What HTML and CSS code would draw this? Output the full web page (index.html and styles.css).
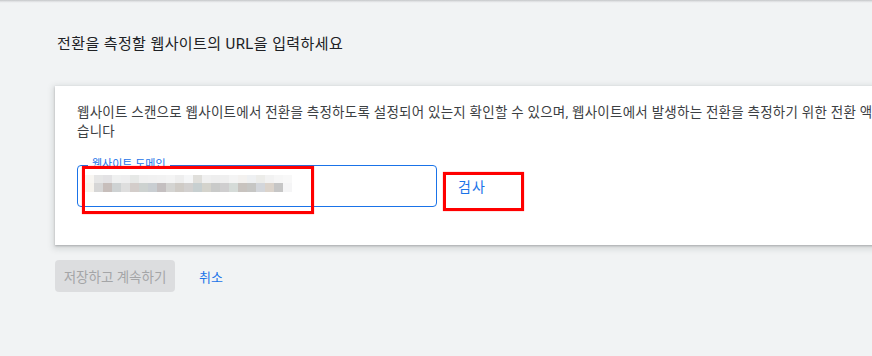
FILE: index.html
```html
<!DOCTYPE html>
<html lang="ko">
<head>
<meta charset="utf-8">
<title>전환 측정</title>
<link rel="stylesheet" href="styles.css">
</head>
<body>
<div class="topshadow"></div>
<main class="page">
  <h1 class="title">전환을 측정할 웹사이트의 URL을 입력하세요</h1>
  <section class="card">
    <p class="desc">웹사이트 스캔으로 웹사이트에서 전환을 측정하도록 설정되어 있는지 확인할 수 있으며, 웹사이트에서 발생하는 전환을 측정하기 위한 전환 액션을 설정할 수 있<br>습니다</p>
    <div class="field-row">
      <div class="field">
        <span class="legend">웹사이트 도메인</span>
        <div class="blur">
          <div class="blur-row r1"></div>
          <div class="blur-row r2"></div>
        </div>
      </div>
      <button class="check-btn" type="button">검사</button>
    </div>
  </section>
  <div class="actions">
    <button class="save-btn" type="button" disabled>저장하고 계속하기</button>
    <button class="cancel-btn" type="button">취소</button>
  </div>
</main>
<div class="mark mark-input"></div>
<div class="mark mark-check"></div>
</body>
</html>
```

FILE: styles.css
```css
html, body {
  margin: 0;
  padding: 0;
  overflow: hidden;
}
body {
  position: relative;
  width: 872px;
  height: 356px;
  background: #f1f3f4;
  font-family: Roboto, "Noto Sans CJK KR", sans-serif;
  color: #202124;
}
.topshadow {
  height: 3px;
  background: linear-gradient(#c4c6c8, #e6e7e9 60%, #f1f3f4);
}
.page {
  padding-left: 55px;
}
.title {
  margin: 31px 0 0 2px;
  font-size: 15px;
  line-height: 20px;
  letter-spacing: 0.4px;
  font-weight: 400;
  color: #202124;
}
.card {
  margin-top: 32px;
  width: 1200px;
  background: #fff;
  padding: 17px 0 38px 22px;
  box-shadow: 0 1px 2px rgba(60,64,67,.3), 0 2px 6px 2px rgba(60,64,67,.15);
}
.desc {
  margin: 0;
  font-size: 13.5px;
  line-height: 19px;
  letter-spacing: 0.25px;
  color: #3c4043;
}
.field-row {
  display: flex;
  align-items: center;
  margin-top: 24px;
}
.field {
  position: relative;
  box-sizing: border-box;
  width: 360px;
  height: 42px;
  border: 1px solid #1a73e8;
  border-radius: 4px;
  padding: 9px 0 0 7px;
}
.legend {
  position: absolute;
  top: -8px;
  left: 10px;
  padding: 0 4px;
  background: #fff;
  font-size: 11px;
  line-height: 14px;
  color: #1a73e8;
}
.blur-row {
  width: 207px;
}
.r1 {
  height: 8px;
  background: linear-gradient(to right,
    #f8f6f2 0 9px, #e6e6e6 9px 18px, #e3e2e4 18px 27px, #eff0f0 27px 36px,
    #eeeeef 36px 45px, #e6e8e6 45px 54px, #f0f0f0 54px 63px, #f1f1f1 63px 72px,
    #f2f2f2 72px 81px, #f4f4f4 81px 90px, #eeeeee 90px 99px, #f5f6f7 99px 108px,
    #e0dfdb 108px 117px, #f0f0f0 117px 126px, #eeeeee 126px 135px, #efefef 135px 144px,
    #f4f4f4 144px 153px, #f3f1ef 153px 162px, #eef0f2 162px 171px, #ecece9 171px 180px,
    #f2f2f2 180px 189px, #f6f6f6 189px 198px, #f8f8f8 198px 207px);
}
.r2 {
  height: 9px;
  background: linear-gradient(to right,
    #f7f4ee 0 9px, #d6d6d6 9px 18px, #c7bebb 18px 27px, #ced2d3 27px 36px,
    #dedede 36px 45px, #d3cdca 45px 54px, #cdd2d0 54px 63px, #c9ced2 63px 72px,
    #c4bfc0 72px 81px, #d4d4d2 81px 90px, #cfcbc6 90px 99px, #d2d0cf 99px 108px,
    #c7cfd0 108px 117px, #d4d3cc 117px 126px, #c9cac9 126px 135px, #cfcecf 135px 144px,
    #d5dbd8 144px 153px, #c8c3bf 153px 162px, #c6c6c4 162px 171px, #d3d6db 171px 180px,
    #dbd3cb 180px 189px, #c6c6c6 189px 198px, #f5f5f6 198px 207px);
}
.check-btn {
  margin-left: 5px;
  padding: 0 16px;
  height: 36px;
  border: 0;
  background: transparent;
  font-family: inherit;
  font-size: 14px;
  letter-spacing: 1px;
  color: #1a73e8;
}
.actions {
  display: flex;
  align-items: center;
  margin-top: 15px;
}
.save-btn {
  width: 120px;
  height: 32px;
  border: 0;
  border-radius: 4px;
  background: #dcdddf;
  font-family: inherit;
  font-size: 13.5px;
  color: #a4a5a7;
  padding: 0;
}
.cancel-btn {
  margin-left: 8px;
  padding: 0 16px;
  height: 32px;
  border: 0;
  background: transparent;
  font-family: inherit;
  font-size: 13px;
  color: #1a73e8;
}
.mark {
  position: absolute;
  box-sizing: border-box;
  border: 3px solid #ff0000;
  box-shadow: 0 0 1px rgba(255,0,0,.6);
}
.mark-input {
  left: 82px;
  top: 166px;
  width: 232px;
  height: 48px;
}
.mark-check {
  left: 443px;
  top: 172px;
  width: 81px;
  height: 39px;
}
```
